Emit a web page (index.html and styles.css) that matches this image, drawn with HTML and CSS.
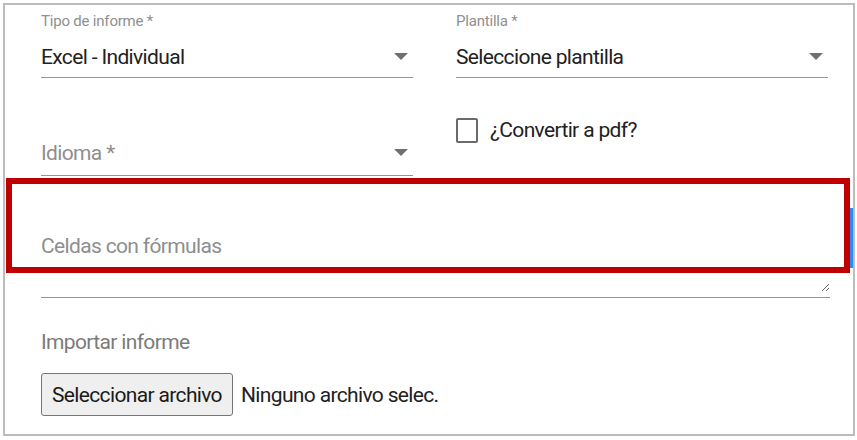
FILE: index.html
```html
<!DOCTYPE html>
<html lang="es">
<head>
<meta charset="utf-8">
<title>Informe</title>
<link rel="stylesheet" href="styles.css">
</head>
<body>
<div class="frame">
  <div class="grid">
    <div class="field">
      <div class="label">Tipo de informe *</div>
      <div class="select first">
        <span class="value">Excel - Individual</span>
        <span class="arrow"></span>
      </div>
    </div>
    <div class="field">
      <div class="label">Plantilla *</div>
      <div class="select first">
        <span class="value">Seleccione plantilla</span>
        <span class="arrow"></span>
      </div>
    </div>
    <div class="field">
      <div class="select tall">
        <span class="placeholder">Idioma *</span>
        <span class="arrow"></span>
      </div>
    </div>
    <div class="field">
      <label class="check">
        <span class="box"></span>
        <span class="check-text">¿Convertir a pdf?</span>
      </label>
    </div>
    <div class="area-wrap">
      <textarea class="area" placeholder="Celdas con fórmulas"></textarea>
    </div>
    <div class="import">
      <div class="import-label">Importar informe</div>
      <div class="file-row">
        <span class="file-btn">Seleccionar archivo</span>
        <span class="file-name">Ninguno archivo selec.</span>
      </div>
    </div>
  </div>
  <div class="focus-bar"></div>
  <div class="highlight"></div>
</div>
</body>
</html>
```
FILE: styles.css
```css
* { box-sizing: border-box; }
html, body { margin: 0; padding: 0; background: #ffffff; }
body { font-family: Roboto, "Liberation Sans", sans-serif; color: #212121; }

.frame {
  position: relative;
  margin: 3px 0 0 3px;
  width: 852px;
  height: 433px;
  border: 2px solid #bcbcbc;
  background: #fff;
}

.grid {
  display: grid;
  grid-template-columns: 372px 372px;
  column-gap: 43px;
  padding-left: 36px;
}

.field { display: flex; flex-direction: column; }

.label {
  margin-top: 8px;
  font-size: 15px;
  line-height: 17px;
  letter-spacing: -0.2px;
  color: #8f8f8f;
}

.select {
  display: flex;
  align-items: flex-end;
  justify-content: space-between;
  border-bottom: 1px solid #949494;
}
.select.first { height: 48px; padding-bottom: 8px; }
.select.tall { height: 98px; padding-bottom: 10px; }

.value, .placeholder, .check-text, .import-label, .file-btn, .file-name, .area {
  font-size: 21px;
  letter-spacing: -0.65px;
}

.value { line-height: 24px; color: #212121; }
.placeholder { line-height: 24px; color: #8e8e8e; }

.arrow {
  width: 0; height: 0;
  margin: 0 5px 9px 0;
  border-left: 7px solid transparent;
  border-right: 7px solid transparent;
  border-top: 7px solid #707070;
}

.check {
  display: flex;
  align-items: center;
  margin-top: 39px;
  height: 26px;
}
.box {
  width: 22px;
  height: 25px;
  border: 2px solid #6a6a6a;
  border-radius: 2px;
}
.check-text {
  margin-left: 12px;
  line-height: 24px;
  color: #212121;
}

.area-wrap {
  grid-column: 1 / span 2;
  width: 789px;
  margin-top: 50px;
  padding-bottom: 5px;
  border-bottom: 1px solid #949494;
}
.area {
  display: block;
  width: 100%;
  height: 66px;
  padding: 8px 0 0 0;
  border: 0;
  outline: none;
  resize: vertical;
  font-family: Roboto, "Liberation Sans", sans-serif;
  line-height: 24px;
  color: #212121;
  background: transparent;
}
.area::placeholder { color: #8e8e8e; opacity: 1; }

.import { grid-column: 1 / span 2; margin-top: 32px; }
.import-label { line-height: 24px; color: #7b7b7b; }
.file-row { display: flex; align-items: center; margin-top: 19px; }
.file-btn {
  display: flex;
  align-items: center;
  justify-content: center;
  width: 192px;
  height: 43px;
  background: #efefef;
  border: 1px solid #767676;
  border-radius: 3px;
  color: #1a1a1a;
}
.file-name { margin-left: 8px; color: #212121; }

.focus-bar {
  position: absolute;
  right: 0;
  top: 203px;
  width: 3px;
  height: 60px;
  background: #2a8af6;
}

.highlight {
  position: absolute;
  left: 1px;
  top: 173px;
  width: 844px;
  height: 95px;
  border: 6px solid #c00000;
  pointer-events: none;
}
```
